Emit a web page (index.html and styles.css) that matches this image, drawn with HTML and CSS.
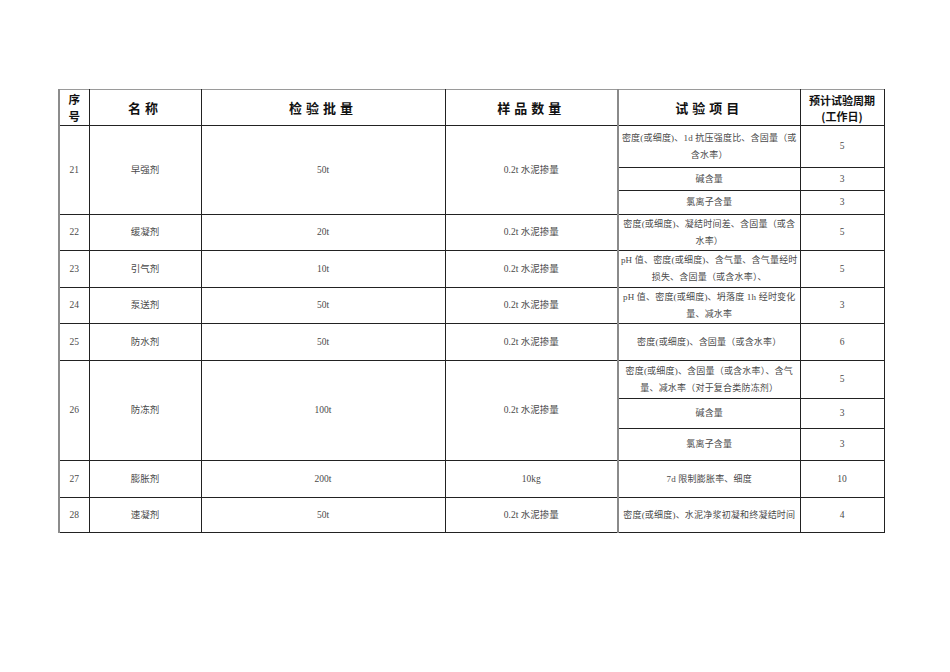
FILE: index.html
```html
<!DOCTYPE html>
<html lang="zh">
<head>
<meta charset="utf-8">
<link rel="stylesheet" href="styles.css">
</head>
<body>
<div class="page">
<table class="grid">
  <colgroup>
    <col class="c-no"><col class="c-name"><col class="c-batch"><col class="c-qty"><col class="c-item"><col class="c-days">
  </colgroup>
  <thead>
    <tr class="h-head">
      <th class="th-no">序<br>号</th>
      <th class="spaced">名称</th>
      <th class="spaced">检验批量</th>
      <th class="spaced">样品数量</th>
      <th class="spaced item-col">试验项目</th>
      <th class="th-days">预计试验周期<br>(工作日)</th>
    </tr>
  </thead>
  <tbody>
    <tr class="h-42">
      <td rowspan="3" class="first">21</td>
      <td rowspan="3">早强剂</td>
      <td rowspan="3">50t</td>
      <td rowspan="3">0.2t 水泥掺量</td>
      <td class="item-col">密度(或细度)、1d 抗压强度比、含固量（或<br>含水率）</td>
      <td>5</td>
    </tr>
    <tr class="h-23"><td class="item-col">碱含量</td><td>3</td></tr>
    <tr class="h-24"><td class="item-col">氯离子含量</td><td>3</td></tr>

    <tr class="h-36">
      <td class="first">22</td><td>缓凝剂</td><td>20t</td><td>0.2t 水泥掺量</td>
      <td class="item-col">密度(或细度)、凝结时间差、含固量（或含<br>水率）</td><td>5</td>
    </tr>
    <tr class="h-37">
      <td class="first">23</td><td>引气剂</td><td>10t</td><td>0.2t 水泥掺量</td>
      <td class="item-col">pH 值、密度(或细度)、含气量、含气量经时<br>损失、含固量（或含水率）、</td><td>5</td>
    </tr>
    <tr class="h-36">
      <td class="first">24</td><td>泵送剂</td><td>50t</td><td>0.2t 水泥掺量</td>
      <td class="item-col">pH 值、密度(或细度)、坍落度 1h 经时变化<br>量、减水率</td><td>3</td>
    </tr>
    <tr class="h-37">
      <td class="first">25</td><td>防水剂</td><td>50t</td><td>0.2t 水泥掺量</td>
      <td class="item-col">密度(或细度)、含固量（或含水率）</td><td>6</td>
    </tr>

    <tr class="h-38">
      <td rowspan="3" class="first">26</td>
      <td rowspan="3">防冻剂</td>
      <td rowspan="3">100t</td>
      <td rowspan="3">0.2t 水泥掺量</td>
      <td class="item-col">密度(或细度)、含固量（或含水率）、含气<br>量、减水率（对于复合类防冻剂）</td>
      <td>5</td>
    </tr>
    <tr class="h-30"><td class="item-col">碱含量</td><td>3</td></tr>
    <tr class="h-32"><td class="item-col">氯离子含量</td><td>3</td></tr>

    <tr class="h-37">
      <td class="first">27</td><td>膨胀剂</td><td>200t</td><td>10kg</td>
      <td class="item-col">7d 限制膨胀率、细度</td><td>10</td>
    </tr>
    <tr class="h-35">
      <td class="first">28</td><td>速凝剂</td><td>50t</td><td>0.2t 水泥掺量</td>
      <td class="item-col">密度(或细度)、水泥净浆初凝和终凝结时间</td><td>4</td>
    </tr>
  </tbody>
</table>
</div>
</body>
</html>
```

FILE: styles.css
```css
html, body {
  margin: 0;
  padding: 0;
  background: #ffffff;
}

.page {
  padding: 89px 0 0 58px;
}

.grid {
  border-collapse: collapse;
  table-layout: fixed;
  width: 825px;
  font-family: "Liberation Serif", "Noto Sans CJK SC", serif;
  font-size: 9.5px;
  color: #4a4a4a;
}

.c-no { width: 30px; }
.c-name { width: 112px; }
.c-batch { width: 244px; }
.c-qty { width: 173px; }
.c-item { width: 182px; }
.c-days { width: 84px; }

.grid th,
.grid td {
  border: 1px solid #222222;
  padding: 0 1px;
  text-align: center;
  vertical-align: middle;
  line-height: 17px;
  white-space: nowrap;
}

.grid td.item-col {
  font-size: 9px;
  letter-spacing: 0.2px;
}

.grid th {
  font-family: "Noto Sans CJK SC", sans-serif;
  font-weight: 700;
  color: #111111;
  border-top: 1px solid #9a9a9a;
  line-height: 15px;
}

.grid th.spaced {
  font-size: 13px;
  letter-spacing: 4px;
}

.grid th.th-no {
  font-size: 11.5px;
  line-height: 17px;
  border-left: 2px solid #8c8c8c;
}

.grid th.th-days {
  font-size: 11px;
  line-height: 16px;
  font-weight: 700;
}

.grid td.first {
  border-left: 2px solid #8c8c8c;
}

.grid .item-col {
  border-left: 2px solid #8a8a8a;
}

.h-head { height: 36px; }
.h-42 { height: 42px; }
.h-23 { height: 23px; }
.h-24 { height: 24px; }
.h-30 { height: 30px; }
.h-32 { height: 32px; }
.h-35 { height: 35px; }
.h-36 { height: 36px; }
.h-37 { height: 37px; }
.h-38 { height: 38px; }
```
